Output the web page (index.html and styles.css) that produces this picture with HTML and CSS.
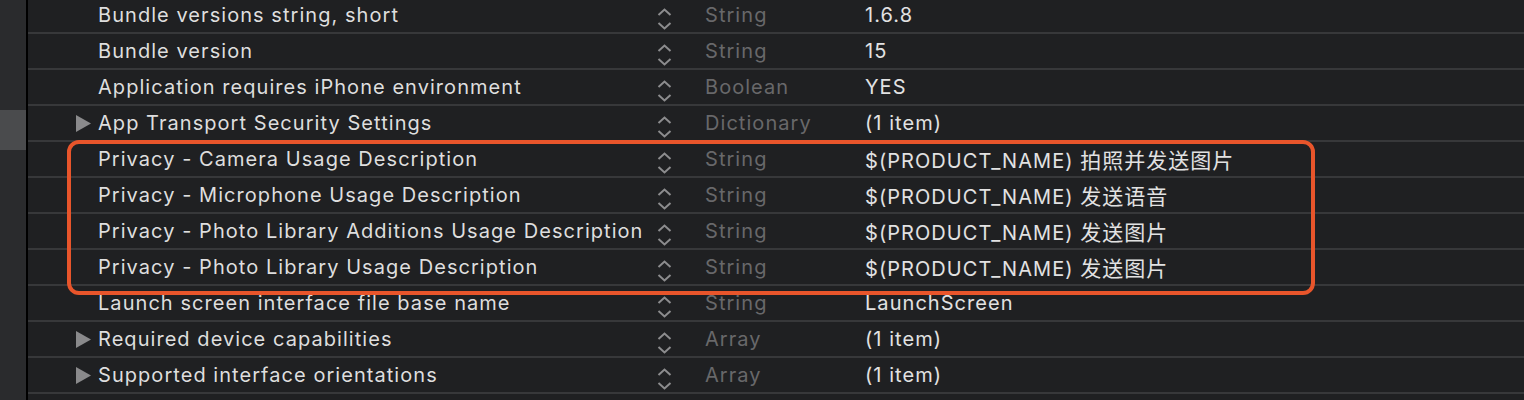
FILE: index.html
```html
<!DOCTYPE html>
<html>
<head>
<meta charset="utf-8">
<link rel="stylesheet" href="styles.css">
</head>
<body>
<div class="app">
  <aside class="sidebar">
    <div class="side-gap"></div>
    <div class="side-sel"></div>
  </aside>
  <div class="divider"></div>
  <main class="main">
    <div class="list">
      <div class="row"><span class="disc"></span><span class="name">Bundle versions string, short</span><span class="step"><svg width="15" height="22" viewBox="0 0 15 22"><path d="M1.5 7 L7.5 1.5 L13.5 7 M1.5 15 L7.5 20.5 L13.5 15" /></svg></span><span class="type">String</span><span class="value">1.6.8</span></div>
      <div class="row"><span class="disc"></span><span class="name">Bundle version</span><span class="step"><svg width="15" height="22" viewBox="0 0 15 22"><path d="M1.5 7 L7.5 1.5 L13.5 7 M1.5 15 L7.5 20.5 L13.5 15" /></svg></span><span class="type">String</span><span class="value">15</span></div>
      <div class="row"><span class="disc"></span><span class="name">Application requires iPhone environment</span><span class="step"><svg width="15" height="22" viewBox="0 0 15 22"><path d="M1.5 7 L7.5 1.5 L13.5 7 M1.5 15 L7.5 20.5 L13.5 15" /></svg></span><span class="type">Boolean</span><span class="value">YES</span></div>
      <div class="row"><span class="disc"><svg width="15" height="17" viewBox="0 0 15 17"><path class="tri" d="M0 0 L15 8.5 L0 17 Z"/></svg></span><span class="name">App Transport Security Settings</span><span class="step"><svg width="15" height="22" viewBox="0 0 15 22"><path d="M1.5 7 L7.5 1.5 L13.5 7 M1.5 15 L7.5 20.5 L13.5 15" /></svg></span><span class="type">Dictionary</span><span class="value">(1 item)</span></div>
      <div class="row"><span class="disc"></span><span class="name">Privacy - Camera Usage Description</span><span class="step"><svg width="15" height="22" viewBox="0 0 15 22"><path d="M1.5 7 L7.5 1.5 L13.5 7 M1.5 15 L7.5 20.5 L13.5 15" /></svg></span><span class="type">String</span><span class="value">$(PRODUCT_NAME) <span class="cjk">拍照并发送图片</span></span></div>
      <div class="row"><span class="disc"></span><span class="name">Privacy - Microphone Usage Description</span><span class="step"><svg width="15" height="22" viewBox="0 0 15 22"><path d="M1.5 7 L7.5 1.5 L13.5 7 M1.5 15 L7.5 20.5 L13.5 15" /></svg></span><span class="type">String</span><span class="value">$(PRODUCT_NAME) <span class="cjk">发送语音</span></span></div>
      <div class="row"><span class="disc"></span><span class="name">Privacy - Photo Library Additions Usage Description</span><span class="step"><svg width="15" height="22" viewBox="0 0 15 22"><path d="M1.5 7 L7.5 1.5 L13.5 7 M1.5 15 L7.5 20.5 L13.5 15" /></svg></span><span class="type">String</span><span class="value">$(PRODUCT_NAME) <span class="cjk">发送图片</span></span></div>
      <div class="row"><span class="disc"></span><span class="name">Privacy - Photo Library Usage Description</span><span class="step"><svg width="15" height="22" viewBox="0 0 15 22"><path d="M1.5 7 L7.5 1.5 L13.5 7 M1.5 15 L7.5 20.5 L13.5 15" /></svg></span><span class="type">String</span><span class="value">$(PRODUCT_NAME) <span class="cjk">发送图片</span></span></div>
      <div class="row"><span class="disc"></span><span class="name">Launch screen interface file base name</span><span class="step"><svg width="15" height="22" viewBox="0 0 15 22"><path d="M1.5 7 L7.5 1.5 L13.5 7 M1.5 15 L7.5 20.5 L13.5 15" /></svg></span><span class="type">String</span><span class="value">LaunchScreen</span></div>
      <div class="row"><span class="disc"><svg width="15" height="17" viewBox="0 0 15 17"><path class="tri" d="M0 0 L15 8.5 L0 17 Z"/></svg></span><span class="name">Required device capabilities</span><span class="step"><svg width="15" height="22" viewBox="0 0 15 22"><path d="M1.5 7 L7.5 1.5 L13.5 7 M1.5 15 L7.5 20.5 L13.5 15" /></svg></span><span class="type">Array</span><span class="value">(1 item)</span></div>
      <div class="row"><span class="disc"><svg width="15" height="17" viewBox="0 0 15 17"><path class="tri" d="M0 0 L15 8.5 L0 17 Z"/></svg></span><span class="name">Supported interface orientations</span><span class="step"><svg width="15" height="22" viewBox="0 0 15 22"><path d="M1.5 7 L7.5 1.5 L13.5 7 M1.5 15 L7.5 20.5 L13.5 15" /></svg></span><span class="type">Array</span><span class="value">(1 item)</span></div>
      <div class="row"><span class="disc"><svg width="15" height="17" viewBox="0 0 15 17"><path class="tri" d="M0 0 L15 8.5 L0 17 Z"/></svg></span><span class="name">Supported interface orientations (iPad)</span><span class="step"><svg width="15" height="22" viewBox="0 0 15 22"><path d="M1.5 7 L7.5 1.5 L13.5 7 M1.5 15 L7.5 20.5 L13.5 15" /></svg></span><span class="type">Array</span><span class="value">(4 items)</span></div>
    </div>
    <div class="highlight-box"></div>
  </main>
</div>
</body>
</html>
```

FILE: styles.css
```css
html, body {
  margin: 0;
  padding: 0;
  background: #1f2022;
  overflow: hidden;
  height: 400px;
}

.app {
  display: flex;
  height: 400px;
  font-family: "Inter", "Noto Sans CJK SC", sans-serif;
}

.sidebar {
  width: 26px;
  flex: none;
  background: #2a2b2d;
  display: flex;
  flex-direction: column;
}

.side-gap {
  height: 110px;
}

.side-sel {
  height: 40px;
  background: #4a4b4d;
}

.divider {
  width: 2px;
  flex: none;
  background: #000;
}

.main {
  flex: 1;
  position: relative;
  overflow: hidden;
}

.list {
  margin-top: -2px;
}

.row {
  display: grid;
  grid-template-columns: 70px 557px 50px 160px 1fr;
  align-items: center;
  height: 34px;
  border-bottom: 2px solid #37383a;
  font-size: 20px;
  letter-spacing: 1.05px;
  white-space: nowrap;
}

.disc {
  display: flex;
  justify-content: flex-end;
  padding-right: 7px;
  height: 17px;
}

.tri {
  fill: #8a8a8c;
}

.name {
  color: #dedede;
}

.step {
  display: flex;
  padding-left: 2px;
  padding-top: 7px;
}

.step path {
  fill: none;
  stroke: #8c8c8e;
  stroke-width: 2;
}

.type {
  color: #68686a;
}

.value {
  color: #e2e2e2;
}

.cjk {
  font-size: 21px;
  letter-spacing: 1px;
}

.highlight-box {
  position: absolute;
  left: 39px;
  top: 140px;
  width: 1240px;
  height: 147px;
  border: 4px solid #e8552b;
  border-radius: 12px;
}
```
